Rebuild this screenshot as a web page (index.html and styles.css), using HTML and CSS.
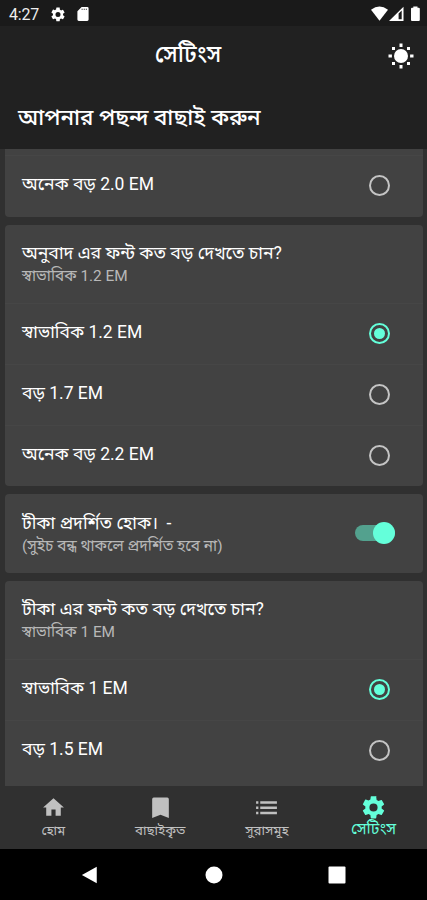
FILE: index.html
```
<!DOCTYPE html>
<html lang="bn">
<head>
<meta charset="utf-8">
<title>সেটিংস</title>
<link rel="stylesheet" href="styles.css">
</head>
<body>
<div class="status">
  <span class="clock">4:27</span>
  <svg class="status-gear" viewBox="2 2 20 20"><path fill="currentColor" fill-rule="evenodd" d="M19.14 12.94c.04-.3.06-.61.06-.94s-.02-.64-.07-.94l2.03-1.58a.49.49 0 0 0 .12-.61l-1.92-3.32a.49.49 0 0 0-.59-.22l-2.39.96a7 7 0 0 0-1.62-.94l-.36-2.54A.48.48 0 0 0 13.92 2h-3.84a.47.47 0 0 0-.47.41l-.36 2.54c-.59.24-1.13.57-1.62.94l-2.39-.96a.48.48 0 0 0-.59.22L2.74 8.87a.47.47 0 0 0 .12.61l2.03 1.58a6 6 0 0 0-.02 1.88l-2.03 1.58a.49.49 0 0 0-.12.61l1.92 3.32c.12.22.37.29.59.22l2.39-.96c.5.38 1.03.7 1.62.94l.36 2.54c.05.24.24.41.48.41h3.84c.24 0 .44-.17.47-.41l.36-2.54c.59-.24 1.13-.56 1.62-.94l2.39.96c.22.08.47 0 .59-.22l1.92-3.32a.47.47 0 0 0-.12-.61zM12 15.6a3.6 3.6 0 1 1 0-7.2 3.6 3.6 0 0 1 0 7.2z"/></svg>
  <svg class="sd" viewBox="4 2 16 20"><path fill="currentColor" fill-rule="evenodd" d="M18 2h-8L4 8v12a2 2 0 0 0 2 2h12a2 2 0 0 0 2-2V4a2 2 0 0 0-2-2zM10 4.500h1.500v1.500H10zM13 4.500h1.500v1.500H13zM16 4.500h1.500v1.500H16z"/></svg>
  <svg class="signals" viewBox="0 0 50 16"><g fill="currentColor"><path d="M0 3.7Q8.5-2.7 17 3.7L8.5 14.7z"/><path fill-rule="evenodd" d="M32.5.8V15H18zM27.6 7.6V13.2h3.1V4.5z"/><path d="M41 1.8h1.3V.5h4.2v1.3h1.3q1 0 1 1V14q0 1-1 1H41q-1 0-1-1V2.8q0-1 1-1z"/></g></svg>
</div>
<header class="appbar">
  <h1>সেটিংস</h1>
  <svg class="sun" viewBox="0 0 26 26"><g fill="currentColor"><circle cx="13" cy="13" r="7"/><path d="M11.5.5h3v3.4h-3zM11.5 22.1h3v3.4h-3zM.5 11.5h3.4v3H.5zM22.1 11.5h3.4v3h-3.4zM4 4h3v3H4zM19 4h3v3h-3zM4 19h3v3H4zM19 19h3v3h-3z"/></g></svg>
</header>
<h2 class="heading">আপনার পছন্দ বাছাই করুন</h2>
<main class="list">
  <section class="card card-cut"><div class="row"><span>অনেক বড় 2.0 EM</span><i class="radio"></i></div></section>
  <section class="card">
    <div class="head"><p>অনুবাদ এর ফন্ট কত বড় দেখতে চান?</p><small>স্বাভাবিক 1.2 EM</small></div>
    <div class="row"><span>স্বাভাবিক 1.2 EM</span><i class="radio on"></i></div>
    <div class="row"><span>বড় 1.7 EM</span><i class="radio"></i></div>
    <div class="row"><span>অনেক বড় 2.2 EM</span><i class="radio"></i></div>
  </section>
  <section class="card toggle">
    <div class="head"><p>টীকা প্রদর্শিত হোক।&nbsp; -</p><small>(সুইচ বন্ধ থাকলে প্রদর্শিত হবে না)</small></div>
    <div class="switch"><i class="knob"></i></div>
  </section>
  <section class="card card-open">
    <div class="head"><p>টীকা এর ফন্ট কত বড় দেখতে চান?</p><small>স্বাভাবিক 1 EM</small></div>
    <div class="row"><span>স্বাভাবিক 1 EM</span><i class="radio on"></i></div>
    <div class="row"><span>বড় 1.5 EM</span><i class="radio"></i></div>
  </section>
</main>
<nav class="tabs">
  <a class="tab"><svg viewBox="0 0 24 24"><path fill="currentColor" d="M10 20v-6h4v6h5v-8h3L12 3 2 12h3v8z"/></svg><span>হোম</span></a>
  <a class="tab"><svg viewBox="0 0 24 24"><path fill="currentColor" d="M18.500 2.500h-13A1.500 1.500 0 0 0 4 4v18l8-3 8 3V4a1.500 1.500 0 0 0-1.500-1.500z"/></svg><span>বাছাইকৃত</span></a>
  <a class="tab"><svg viewBox="0 0 24 24"><path fill="currentColor" d="M2 6h2.200v2.400H2zM2 11h2.200v2.400H2zM2 16h2.200v2.400H2zM6 6h16v2.400H6zM6 11h16v2.400H6zM6 16h16v2.400H6z"/></svg><span>সুরাসমূহ</span></a>
  <a class="tab active"><svg viewBox="1 1 22 22"><path fill="currentColor" fill-rule="evenodd" d="M19.14 12.94c.04-.3.06-.61.06-.94s-.02-.64-.07-.94l2.03-1.58a.49.49 0 0 0 .12-.61l-1.92-3.32a.49.49 0 0 0-.59-.22l-2.39.96a7 7 0 0 0-1.62-.94l-.36-2.54A.48.48 0 0 0 13.92 2h-3.84a.47.47 0 0 0-.47.41l-.36 2.54c-.59.24-1.13.57-1.62.94l-2.39-.96a.48.48 0 0 0-.59.22L2.74 8.87a.47.47 0 0 0 .12.61l2.03 1.58a6 6 0 0 0-.02 1.88l-2.03 1.58a.49.49 0 0 0-.12.61l1.92 3.32c.12.22.37.29.59.22l2.39-.96c.5.38 1.03.7 1.62.94l.36 2.54c.05.24.24.41.48.41h3.84c.24 0 .44-.17.47-.41l.36-2.54c.59-.24 1.13-.56 1.62-.94l2.39.96c.22.08.47 0 .59-.22l1.92-3.32a.47.47 0 0 0-.12-.61zM12 15.6a3.6 3.6 0 1 1 0-7.2 3.6 3.6 0 0 1 0 7.2z"/></svg><span>সেটিংস</span></a>
</nav>
<div class="system">
  <svg viewBox="0 0 18 20"><path fill="#fff" d="M0 10 16.5.8v18.4z"/></svg>
  <svg viewBox="0 0 18 18"><circle cx="9" cy="9" r="8.5" fill="#fff"/></svg>
  <svg viewBox="0 0 18 18"><rect x=".5" y=".5" width="17" height="17" rx="1" fill="#fff"/></svg>
</div>
</body>
</html>
```
FILE: styles.css
```
* { box-sizing: border-box; margin: 0; padding: 0; }
body {
  width: 427px; height: 900px; overflow: hidden;
  display: flex; flex-direction: column;
  background: #303030; color: #fff;
  font-family: Roboto, "Noto Sans Bengali", "Noto Sans", sans-serif;
}
svg { display: block; flex: none; }
.status { height: 26px; flex: none; display: flex; align-items: center; padding: 2px 7px 0 9px; background: #1a1a1a; }
.clock { width: 42px; font-size: 16px; letter-spacing: -.2px; color: #eee; }
.status-gear { width: 14px; height: 15px; }
.sd { width: 12px; height: 14px; margin-left: 12px; }
.signals { width: 50px; height: 16px; margin-left: auto; margin-right: -1px; margin-top: -1px; }
.appbar { height: 58px; flex: none; display: grid; grid-template-columns: 1fr 26px; align-items: center; padding: 0 13px 0 11px; background: #212121; }
.appbar h1 { font-size: 23px; font-weight: 500; line-height: 30px; text-align: center; padding-right: 23px; }
.sun { width: 26px; height: 26px; margin-top: 2px; }
.heading { height: 65px; flex: none; padding: 18px 18px 0; font-size: 22.4px; line-height: 30px; font-weight: 500; background: #212121; }
.list { height: 637px; flex: none; overflow: hidden; display: flex; flex-direction: column; gap: 8px; padding: 0 4px 0 5px; }
.card { flex: none; background: #424242; border-radius: 4px; }
.card-cut { height: 68px; border-radius: 0 0 4px 4px; padding-top: 6px; }
.card-open { height: 240px; }
.head { height: 78px; padding: 17px 17px 0; }
.head p { font-size: 17.65px; line-height: 23px; white-space: nowrap; }
.head small { display: block; font-size: 15.4px; line-height: 23px; color: #b8b8b8; white-space: nowrap; }
.row { height: 61px; display: flex; align-items: center; justify-content: space-between; padding: 0 33px 2px 17px; font-size: 17.5px; border-top: 1px solid #464646; }
.row span { line-height: 24px; margin-top: -3px; }
.radio { width: 21px; height: 21px; border: 2px solid #c4c4c4; border-radius: 50%; display: grid; place-items: center; }
.on { border-color: #64ffda; }
.on::after { content: ""; width: 11px; height: 11px; border-radius: 50%; background: #64ffda; }
.toggle { display: flex; justify-content: space-between; align-items: center; padding-right: 28px; height: 79px; }
.switch { width: 40px; height: 16px; margin-bottom: 1px; display: flex; align-items: center; justify-content: flex-end; background: #53a18e; border-radius: 8px; }
.knob { flex: none; width: 22px; height: 22px; border-radius: 50%; background: #64ffda; }
.tabs { height: 63px; flex: none; display: grid; grid-template-columns: repeat(4, 1fr); }
.tab { display: flex; flex-direction: column; align-items: center; padding-top: 9px; color: #c0c0c0; font-size: 13.3px; }
.tab svg { width: 25px; height: 25px; }
.tab span { line-height: 18px; margin-top: 2px; }
.active { color: #64ffda; font-size: 15.8px; }
.active span { margin-top: 0; }
.system { height: 51px; flex: none; background: #000; display: flex; justify-content: space-between; align-items: center; padding: 0 81px; }
.system svg { width: 18px; height: 18px; }
```
